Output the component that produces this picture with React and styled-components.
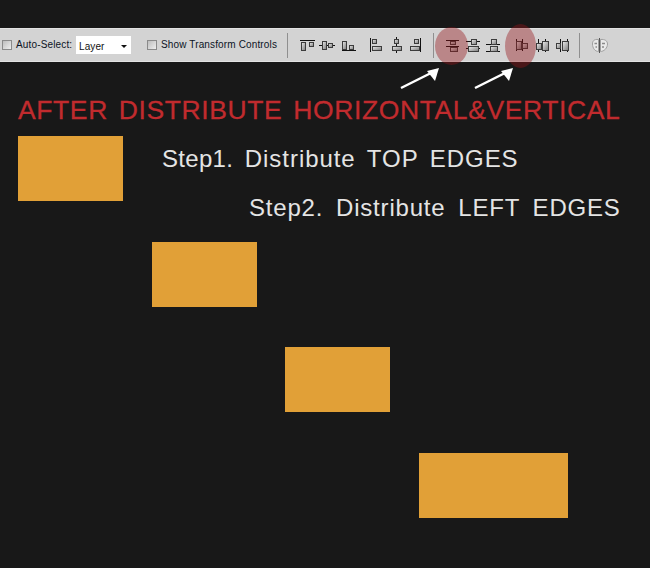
import React from "react";
import styled, { createGlobalStyle } from "styled-components";

const Global = createGlobalStyle`
  html, body { margin: 0; padding: 0; background: #181818; }
  body { width: 650px; height: 568px; overflow: hidden; font-family: "Liberation Sans", Arial, sans-serif; }
`;
const Page = styled.div`
  position: relative; width: 650px; height: 568px; background: #181818; overflow: hidden;
  padding-top: 28px; box-sizing: border-box;
`;
const Toolbar = styled.div`
  display: flex; align-items: center; height: 34px; box-sizing: border-box;
  background: #d3d3d3; border-top: 1px solid #e2e2e2; border-bottom: 1px solid #e2e2e2;
  padding-left: 2px; font-family: "Liberation Sans", sans-serif; font-size: 10px; color: #0c1424;
`;
const Check = styled.span`
  width: 10px; height: 10px; box-sizing: border-box; flex: none;
  border: 1px solid #8a8a8a; background: linear-gradient(135deg, #bdbdbd, #eeeeee);
  margin-right: ${p => p.$mr}px;
`;
const Label = styled.span`
  white-space: nowrap; width: ${p => p.$w}px; flex: none; margin-right: ${p => p.$mr}px;
  letter-spacing: ${p => p.$ls || 0}px; position: relative; top: -1px;
`;
const Select = styled.span`
  display: flex; align-items: center; justify-content: space-between; flex: none;
  width: 55px; height: 18px; box-sizing: border-box; background: #fff; color: #111;
  padding: 2px 4px 0 3px; margin-right: 16px; font-size: 10px; letter-spacing: 0.1px;
  &::after { content: ""; border: 3px solid transparent; border-top: 3px solid #111; border-bottom: 0; }
`;
const Sep = styled.span`
  width: 1px; height: 25px; background: #8f8f8f; flex: none;
  margin-left: ${p => p.$ml}px; margin-right: ${p => p.$mr}px;
`;
const IconSvg = styled.svg`
  flex: none; display: block; width: ${p => p.$w}px; height: 20px;
  margin-right: ${p => p.$mr || 0}px;
`;
const Heading = styled.h1`
  margin: 0; padding: 33px 0 0 18px; font-size: 26.5px; line-height: 30px; font-weight: 400;
  color: #c12b2e; white-space: nowrap; letter-spacing: 0.6px; word-spacing: 3px;
  -webkit-text-stroke: 0.3px #c12b2e;
`;
const Step = styled.p`
  margin: ${p => p.$mt}px 0 0 ${p => p.$ml}px; font-size: 24px; line-height: 28px; color: #e4e4e4;
  white-space: nowrap; word-spacing: ${p => p.$ws}px; letter-spacing: ${p => p.$ls}px;
`;
const StepNo = styled.span`
  letter-spacing: ${p => p.$ls}px;
`;
const Block = styled.div`
  position: absolute; left: ${p => p.$x}px; top: ${p => p.$y}px;
  width: ${p => p.$w}px; height: 65px; background: #e1a037;
`;
const Halo = styled.div`
  position: absolute; left: ${p => p.$x}px; top: ${p => p.$y}px; width: ${p => p.$w}px; height: ${p => p.$h}px;
  border-radius: 50%; background: rgba(150, 20, 25, 0.4);
`;
const Arrow = styled.svg`
  position: absolute; left: ${p => p.$x}px; top: 66px; width: 42px; height: 26px;
`;

/* A shaded mini-box of an Align/Distribute glyph */
const B = ({ x, y, w, h }) => (
  <rect x={x + 0.5} y={y + 0.5} width={w} height={h} fill="url(#g)" stroke="#3c3c3c" strokeWidth="1" />
);
const L = ({ d }) => <path d={d} stroke="#111" strokeWidth="1" fill="none" />;

const Icon = ({ w, mr, children }) => (
  <IconSvg $w={w} $mr={mr} viewBox={`0 0 ${w} 20`}>{children}</IconSvg>
);

const ArrowGlyph = () => (
  <>
    <path d="M3 22L33 7" stroke="#fff" strokeWidth="2.4" fill="none" />
    <path d="M41 2L29 5L37 15Z" fill="#fff" />
  </>
);

export default function App() {
  return (
    <Page>
      <Global />
      <svg width="0" height="0" style={{ position: "absolute" }}>
        <defs>
          <linearGradient id="g" x1="0" y1="0" x2="1" y2="1">
            <stop offset="0" stopColor="#ececec" />
            <stop offset="1" stopColor="#7a7a7a" />
          </linearGradient>
        </defs>
      </svg>
      <Toolbar>
        <Check $mr={4} />
        <Label $w={60} $mr={0} $ls={0.15}>Auto-Select:</Label>
        <Select>Layer</Select>
        <Check $mr={4} />
        <Label $w={118} $mr={6} $ls={0.14}>Show Transform Controls</Label>
        <Sep $ml={2} $mr={12} />
        {/* align edges */}
        <Icon w={16} mr={3}><L d="M0 5.5H15" /><B x={1} y={7} w={4} h={8} /><B x={9} y={7} w={4} h={4} /></Icon>
        <Icon w={16} mr={5}><L d="M0 10.5H16" /><B x={3} y={6} w={4} h={8} /><B x={9} y={8} w={4} h={4} /></Icon>
        <Icon w={16} mr={14}><L d="M2 15.5H16" /><B x={2} y={6} w={4} h={8} /><B x={9} y={10} w={4} h={4} /></Icon>
        <Icon w={13} mr={8}><L d="M0.5 3V17" /><B x={2} y={4} w={4} h={4} /><B x={2} y={11} w={9} h={4} /></Icon>
        <Icon w={11} mr={8}><L d="M5.5 2V18" /><B x={3} y={4} w={4} h={4} /><B x={1} y={11} w={9} h={4} /></Icon>
        <Icon w={11} mr={12}><L d="M10.5 3V17" /><B x={4} y={4} w={4} h={4} /><B x={0} y={11} w={9} h={4} /></Icon>
        <Sep $ml={0} $mr={12} />
        {/* distribute */}
        <Icon w={15} mr={5}><L d="M0 5.5H13M0 11.5H13" /><B x={4} y={6} w={5} h={3} /><B x={4} y={12} w={7} h={4} /></Icon>
        <Icon w={15} mr={5}><L d="M0 6.5H14M0 13.5H14" /><B x={5} y={4} w={5} h={5} /><B x={2} y={11} w={10} h={5} /></Icon>
        <Icon w={15} mr={15}><L d="M0 9.5H14M0 16.5H14" /><B x={5} y={4} w={5} h={5} /><B x={4} y={11} w={7} h={5} /></Icon>
        <Icon w={12} mr={8}><L d="M0.5 4V16M6.5 4V16" /><B x={0} y={6} w={5} h={8} /><B x={6} y={8} w={5} h={5} /></Icon>
        <Icon w={13} mr={7}><L d="M2.5 4V17M9.5 4V17" /><B x={0} y={8} w={5} h={6} /><B x={6} y={6} w={6} h={9} /></Icon>
        <Icon w={13} mr={10}><L d="M4.5 4V17M11.5 4V17" /><B x={0} y={8} w={4} h={5} /><B x={6} y={6} w={6} h={9} /></Icon>
        <Sep $ml={0} $mr={12} />
        <Icon w={16}>
          <path d="M6.5 4.5C2 4 0.5 6 0.5 9C0.5 13 3 16.5 6.5 16.5Z" fill="#e9e9e9" stroke="#a0a0a0" />
          <path d="M8.5 4.5C13 4 15.5 6 15.5 9C15.5 13 12 16.5 8.5 16.5Z" fill="#e9e9e9" stroke="#a0a0a0" />
          <path d="M2.5 8.5H5M10 8.5H13M3.5 12H5M10 12H12" stroke="#8a8a8a" strokeWidth="1.4" fill="none" />
          <path d="M7.5 3V18" stroke="#555" strokeWidth="1" fill="none" />
        </Icon>
      </Toolbar>
      <Heading>AFTER DISTRIBUTE HORIZONTAL&amp;VERTICAL</Heading>
      <Step $mt={20} $ml={162} $ls={0.95} $ws={4}><StepNo $ls={0.3}>Step1.</StepNo> Distribute TOP EDGES</Step>
      <Step $mt={21} $ml={249} $ls={0.8} $ws={5.4}>Step2. Distribute LEFT EDGES</Step>

      <Block $x={18} $y={136} $w={105} />
      <Block $x={152} $y={242} $w={105} />
      <Block $x={285} $y={347} $w={105} />
      <Block $x={419} $y={453} $w={149} />

      <Halo $x={435} $y={27} $w={33} $h={38} />
      <Halo $x={505} $y={24} $w={31} $h={44} />
      <Arrow $x={398} viewBox="0 0 42 26"><ArrowGlyph /></Arrow>
      <Arrow $x={472} viewBox="0 0 42 26"><ArrowGlyph /></Arrow>
    </Page>
  );
}
